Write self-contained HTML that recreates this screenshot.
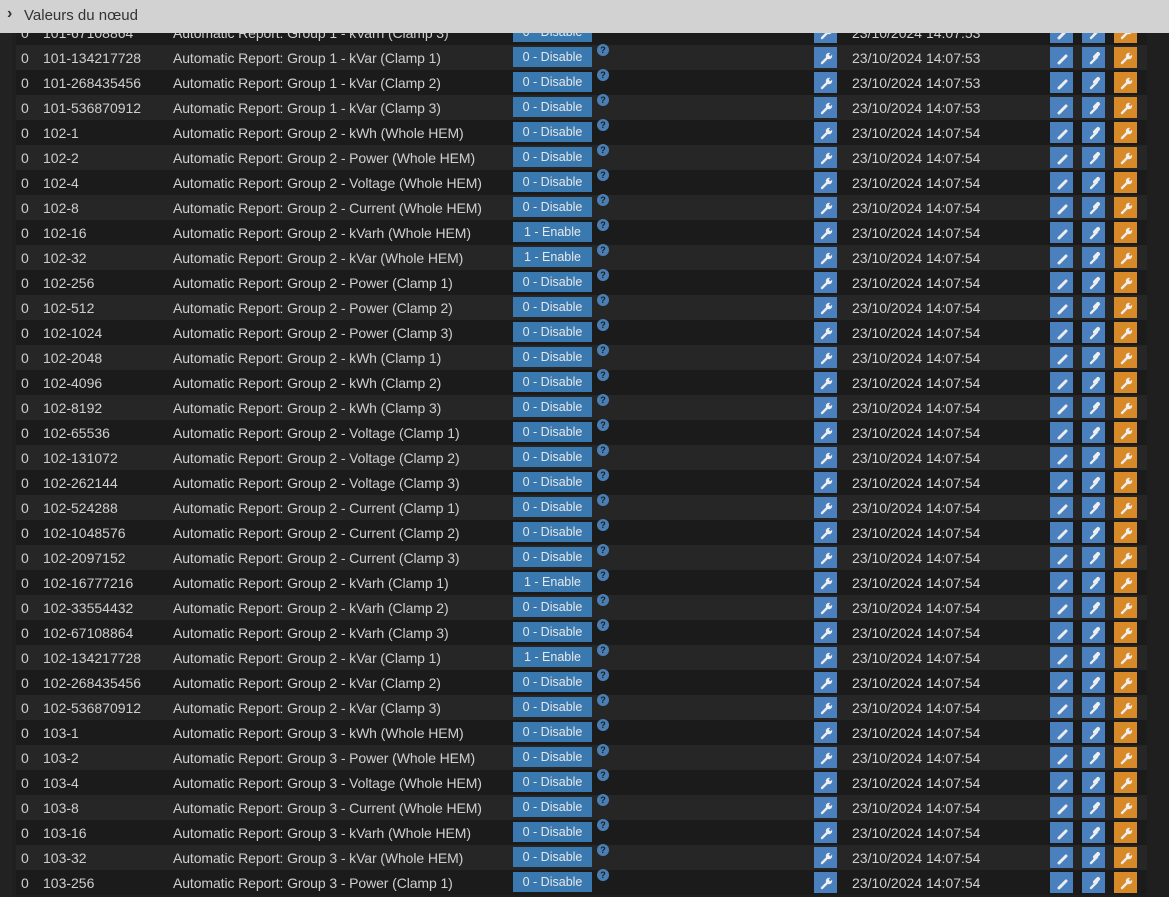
<!DOCTYPE html>
<html><head><meta charset="utf-8"><style>
body{margin:0;width:1169px;height:897px;overflow:hidden;background:#1f1f1f;font-family:"Liberation Sans",sans-serif;font-size:14px;color:#cfcfcf;position:relative}
.lb{position:absolute;left:0;top:0;width:12px;height:897px;background:#222}
.hdr{position:absolute;left:0;top:0;width:1169px;height:33px;background:#d2d2d2;color:#333;font-size:15px;z-index:5}
.hdr span{position:absolute;left:24px;top:7px}
.hdr b{position:absolute;left:7px;top:5px;font-size:16px;font-weight:bold}
.t{position:absolute;left:16px;top:20px;width:1131px}
.r{position:relative;height:25px;background:#1b1b1b}
.r:nth-child(even){background:#262626}
.r div{position:absolute;top:5px;white-space:nowrap}
.a{left:5px}.b{left:27px}.c{left:157px;letter-spacing:-0.1px}.d{left:836px}
.btn{position:absolute;top:2px!important;left:497px;width:79px;height:20px;background:#3a79b0;color:#e8e8e8;font-size:12.5px;text-align:center;line-height:20px}
.q{left:581px;top:-1px!important;width:12px;height:12px;border-radius:50%;background:#4a7fb5;color:#1b1b1b;font-size:9px;font-weight:bold;text-align:center;line-height:12px}
.ic{position:absolute;top:2px!important;width:23px;height:21px;background:#4a80bd}
.ic svg{position:absolute;left:5px;top:4px}
.w{left:798px}.e1{left:1034px}.e2{left:1066px}.e3{left:1098px;background:#d98a28!important}
</style></head><body>
<div class="lb"></div>
<div class="hdr"><b>&#x203A;</b><span>Valeurs du nœud</span></div>
<svg width="0" height="0" style="position:absolute"><defs>
<g id="wr"><path d="M3 12 L9 6" stroke="#eee" stroke-width="2.4" stroke-linecap="round"/><circle cx="10" cy="5" r="3.2" fill="#eee"/><path d="M10.5 4.5 L14 1" stroke="currentColor" stroke-width="2.4"/></g>
<g id="pe"><path d="M4 12 L11 5" stroke="#eee" stroke-width="3" stroke-linecap="round"/></g>
<g id="pe2"><path d="M4 12 L10 6" stroke="#eee" stroke-width="2.4" stroke-linecap="round"/><path d="M8 6 L11 3" stroke="#eee" stroke-width="4" stroke-linecap="round"/></g>
</defs></svg>
<div class="t" id="t">
<div class="r"><div class="a">0</div><div class="b">101-67108864</div><div class="c">Automatic Report: Group 1 - kVarh (Clamp 3)</div><div class="btn">0 - Disable</div><div class="ic w"></div><div class="d">23/10/2024 14:07:53</div><div class="ic e1"></div><div class="ic e2"></div><div class="ic e3"></div></div>
</div>
<script>
var rows=[["101-134217728","Group 1 - kVar (Clamp 1)",0,53],["101-268435456","Group 1 - kVar (Clamp 2)",0,53],["101-536870912","Group 1 - kVar (Clamp 3)",0,53],
["102-1","Group 2 - kWh (Whole HEM)",0],["102-2","Group 2 - Power (Whole HEM)",0],["102-4","Group 2 - Voltage (Whole HEM)",0],["102-8","Group 2 - Current (Whole HEM)",0],["102-16","Group 2 - kVarh (Whole HEM)",1],["102-32","Group 2 - kVar (Whole HEM)",1],["102-256","Group 2 - Power (Clamp 1)",0],["102-512","Group 2 - Power (Clamp 2)",0],["102-1024","Group 2 - Power (Clamp 3)",0],["102-2048","Group 2 - kWh (Clamp 1)",0],["102-4096","Group 2 - kWh (Clamp 2)",0],["102-8192","Group 2 - kWh (Clamp 3)",0],["102-65536","Group 2 - Voltage (Clamp 1)",0],["102-131072","Group 2 - Voltage (Clamp 2)",0],["102-262144","Group 2 - Voltage (Clamp 3)",0],["102-524288","Group 2 - Current (Clamp 1)",0],["102-1048576","Group 2 - Current (Clamp 2)",0],["102-2097152","Group 2 - Current (Clamp 3)",0],["102-16777216","Group 2 - kVarh (Clamp 1)",1],["102-33554432","Group 2 - kVarh (Clamp 2)",0],["102-67108864","Group 2 - kVarh (Clamp 3)",0],["102-134217728","Group 2 - kVar (Clamp 1)",1],["102-268435456","Group 2 - kVar (Clamp 2)",0],["102-536870912","Group 2 - kVar (Clamp 3)",0],["103-1","Group 3 - kWh (Whole HEM)",0],["103-2","Group 3 - Power (Whole HEM)",0],["103-4","Group 3 - Voltage (Whole HEM)",0],["103-8","Group 3 - Current (Whole HEM)",0],["103-16","Group 3 - kVarh (Whole HEM)",0],["103-32","Group 3 - kVar (Whole HEM)",0],["103-256","Group 3 - Power (Clamp 1)",0]];
var t=document.getElementById('t'),h='';
rows.forEach(function(r){h+='<div class="r"><div class="a">0</div><div class="b">'+r[0]+'</div><div class="c">Automatic Report: '+r[1]+'</div><div class="btn">'+(r[2]?'1 - Enable':'0 - Disable')+'</div><div class="q">?</div><div class="ic w"></div><div class="d">23/10/2024 14:07:'+(r[3]||54)+'</div><div class="ic e1"></div><div class="ic e2"></div><div class="ic e3"></div></div>';});
t.innerHTML+=h;
document.querySelectorAll('.w').forEach(function(e){e.innerHTML='<svg width="14" height="14" style="color:#4a80bd"><use href="#wr"/></svg>'});
document.querySelectorAll('.e3').forEach(function(e){e.innerHTML='<svg width="14" height="14" style="color:#d98a28"><use href="#wr"/></svg>'});
document.querySelectorAll('.e1').forEach(function(e){e.innerHTML='<svg width="14" height="14"><use href="#pe"/></svg>'});
document.querySelectorAll('.e2').forEach(function(e){e.innerHTML='<svg width="14" height="14"><use href="#pe2"/></svg>'});
</script>
</body></html>
